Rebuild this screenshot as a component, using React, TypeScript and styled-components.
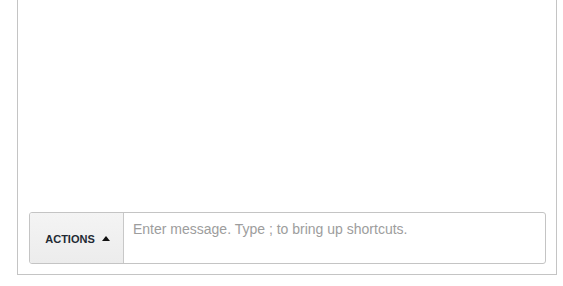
import React from 'react';
import styled, { createGlobalStyle } from 'styled-components';

const GlobalStyle = createGlobalStyle`
  html, body {
    margin: 0;
    padding: 0;
    background: #ffffff;
    font-family: "Liberation Sans", Arial, sans-serif;
  }
`;

const Page = styled.div`
  padding: 0 0 0 17px;
`;

const Panel = styled.div`
  box-sizing: border-box;
  width: 540px;
  height: 275px;
  border: 1px solid #c4c4c4;
  border-top: none;
  background: #fff;
  display: flex;
  flex-direction: column;
  justify-content: flex-end;
  padding: 0 10px 10px 11px;
`;

const Composer = styled.div`
  box-sizing: border-box;
  display: flex;
  height: 52px;
  border: 1px solid #c4c4c4;
  border-radius: 3px;
  background: #fff;
  overflow: hidden;
`;

const ActionsButton = styled.button`
  box-sizing: border-box;
  width: 94px;
  flex: none;
  display: flex;
  align-items: center;
  justify-content: center;
  gap: 7px;
  padding: 2px 0 0 2px;
  border: none;
  border-right: 1px solid #c8c8c8;
  background: linear-gradient(#f4f4f4, #ececec);
  font-family: "Liberation Sans", Arial, sans-serif;
  font-size: 11px;
  font-weight: bold;
  color: #222a33;
  text-transform: uppercase;
  cursor: pointer;
`;

const Caret = styled.span`
  width: 0;
  height: 0;
  border-left: 4px solid transparent;
  border-right: 4px solid transparent;
  border-bottom: 5px solid #111;
  margin-top: -2px;
`;

const MessageInput = styled.textarea`
  flex: 1;
  border: none;
  outline: none;
  resize: none;
  padding: 8px 9px;
  font-family: "Liberation Sans", Arial, sans-serif;
  font-size: 14px;
  color: #333;
  background: transparent;

  &::placeholder {
    color: #9d9d9d;
  }
`;

export default function App() {
  return (
    <Page>
      <GlobalStyle />
      <Panel>
        <Composer>
          <ActionsButton>
            Actions
            <Caret />
          </ActionsButton>
          <MessageInput placeholder="Enter message. Type ; to bring up shortcuts." />
        </Composer>
      </Panel>
    </Page>
  );
}
